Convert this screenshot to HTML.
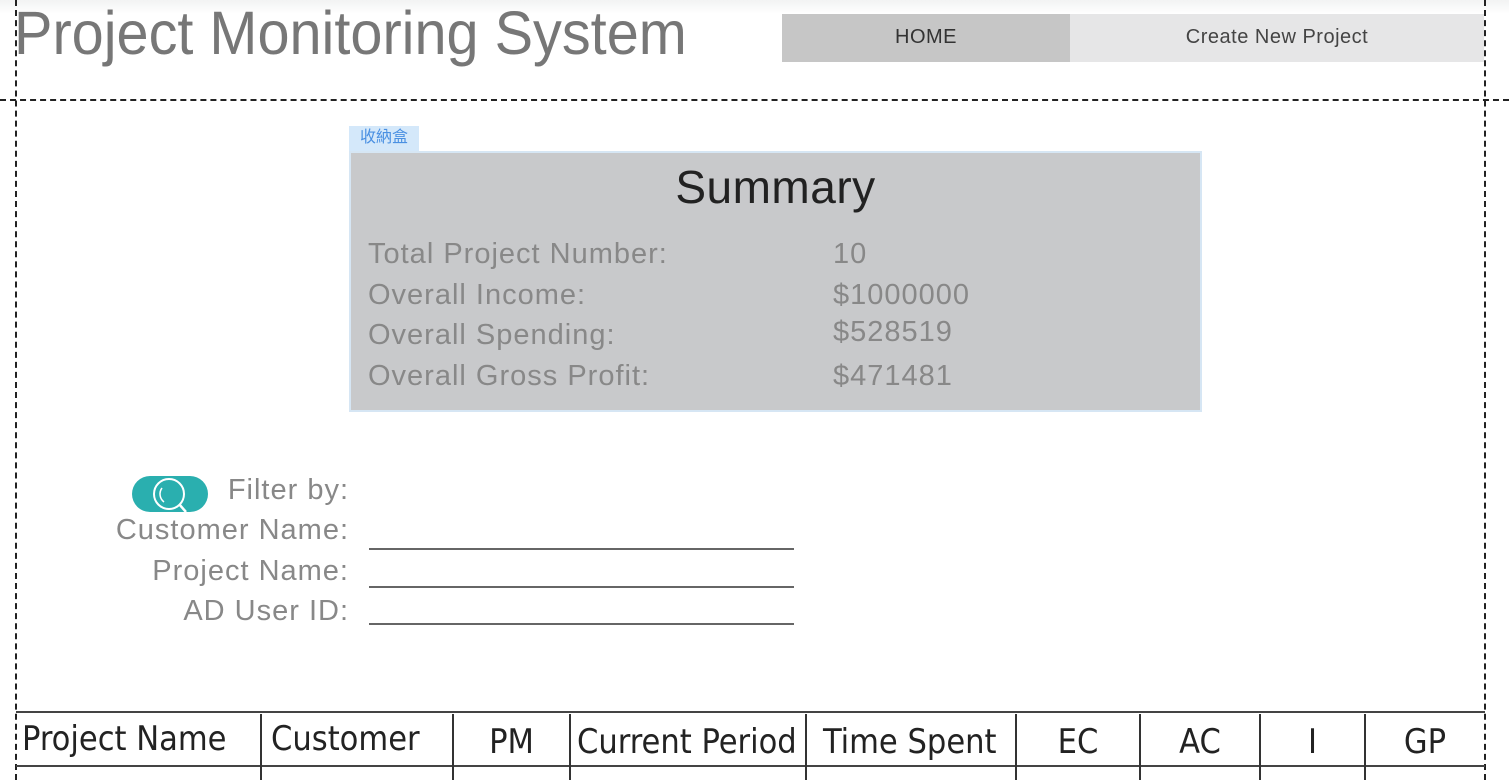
<!DOCTYPE html>
<html><head><meta charset="utf-8"><style>
*{margin:0;padding:0;box-sizing:border-box}
body{width:1509px;height:780px;overflow:hidden;background:#fff;position:relative;font-family:"Liberation Sans",sans-serif}
.a{position:absolute;white-space:nowrap}
.vl{position:absolute;top:0;height:780px;border-left:2px dashed #222}
.g{color:#888;font-size:29px;letter-spacing:1px}
.ln{position:absolute;left:369px;width:425px;height:2px;background:#666}
.th{position:absolute;top:712px;height:68px;font-family:"Liberation Sans Narrow","DejaVu Sans Condensed",sans-serif;font-stretch:condensed;font-size:34px;color:#222;line-height:54px;white-space:nowrap}
.cs{position:absolute;top:714px;height:66px;width:2px;background:#333}
</style></head><body>
<div class="a" style="left:0;top:0;width:1509px;height:14px;background:linear-gradient(#f2f3f3,#fff)"></div>
<div class="vl" style="left:15px"></div>
<div class="vl" style="left:1484px"></div>
<div class="a" style="left:0;top:99px;width:1509px;border-top:2px dashed #222"></div>
<div class="a" style="left:14px;top:3px;font-size:61px;line-height:61px;color:#777;transform:scaleX(0.945);transform-origin:0 0">Project Monitoring System</div>
<div class="a" style="left:782px;top:14px;width:288px;height:48px;background:#c6c6c6;color:#333;font-size:20px;text-align:center;line-height:46px;letter-spacing:0.5px">HOME</div>
<div class="a" style="left:1070px;top:14px;width:414px;height:48px;background:#e6e6e7;color:#444;font-size:20px;text-align:center;line-height:46px;letter-spacing:0.5px">Create New Project</div>
<div class="a" style="left:349px;top:126px;width:70px;height:25px;background:#d4e8fa;color:#4a90e2;font-size:16px;text-align:center;line-height:24px;font-family:'Liberation Sans','Noto Sans CJK TC',sans-serif">收納盒</div>
<div class="a" style="left:349px;top:151px;width:853px;height:261px;background:#c8c9cb;border:2px solid #d6e6f4"></div>
<div class="a" style="left:349px;top:160px;width:853px;text-align:center;font-size:46px;color:#222;letter-spacing:0.5px">Summary</div>
<div class="a g" style="left:368px;top:238px">Total Project Number:</div>
<div class="a g" style="left:833px;top:238px">10</div>
<div class="a g" style="left:368px;top:279px">Overall Income:</div>
<div class="a g" style="left:833px;top:279px">$1000000</div>
<div class="a g" style="left:368px;top:319px">Overall Spending:</div>
<div class="a g" style="left:833px;top:316px">$528519</div>
<div class="a g" style="left:368px;top:360px">Overall Gross Profit:</div>
<div class="a g" style="left:833px;top:360px">$471481</div>
<div class="a" style="left:132px;top:476px;width:76px;height:36px;border-radius:18px;background:#2aafaf"></div>
<svg class="a" style="left:148px;top:476px" width="40" height="40"><circle cx="21" cy="18" r="15" fill="none" stroke="#fff" stroke-width="2"/><path d="M14 12a10 10 0 0 0 2 14" fill="none" stroke="#fff" stroke-width="1.5"/><path d="M31 28l7 8" stroke="#fff" stroke-width="2.5"/></svg>
<div class="a g" style="right:1160px;top:474px">Filter by:</div>
<div class="a g" style="right:1160px;top:514px">Customer Name:</div>
<div class="a g" style="right:1160px;top:555px">Project Name:</div>
<div class="a g" style="right:1160px;top:595px">AD User ID:</div>
<div class="ln" style="top:548px"></div>
<div class="ln" style="top:586px"></div>
<div class="ln" style="top:623px"></div>
<div class="a" style="left:16px;top:711px;width:1469px;height:2px;background:#444"></div>
<div class="a" style="left:16px;top:765px;width:1469px;height:2px;background:#444"></div>
<div class="cs" style="left:260px"></div><div class="cs" style="left:452px"></div><div class="cs" style="left:569px"></div><div class="cs" style="left:805px"></div><div class="cs" style="left:1015px"></div><div class="cs" style="left:1139px"></div><div class="cs" style="left:1259px"></div><div class="cs" style="left:1364px"></div>
<div class="th" style="left:22px;top:712px">Project Name</div>
<div class="th" style="left:271px;top:712px">Customer</div>
<div class="th" style="left:454px;width:115px;text-align:center;top:715px">PM</div>
<div class="th" style="left:577px;top:715px">Current Period</div>
<div class="th" style="left:823px;top:715px">Time Spent</div>
<div class="th" style="left:1017px;width:122px;text-align:center;top:715px">EC</div>
<div class="th" style="left:1141px;width:118px;text-align:center;top:715px">AC</div>
<div class="th" style="left:1261px;width:103px;text-align:center;top:715px">I</div>
<div class="th" style="left:1366px;width:118px;text-align:center;top:715px">GP</div>
</body></html>
